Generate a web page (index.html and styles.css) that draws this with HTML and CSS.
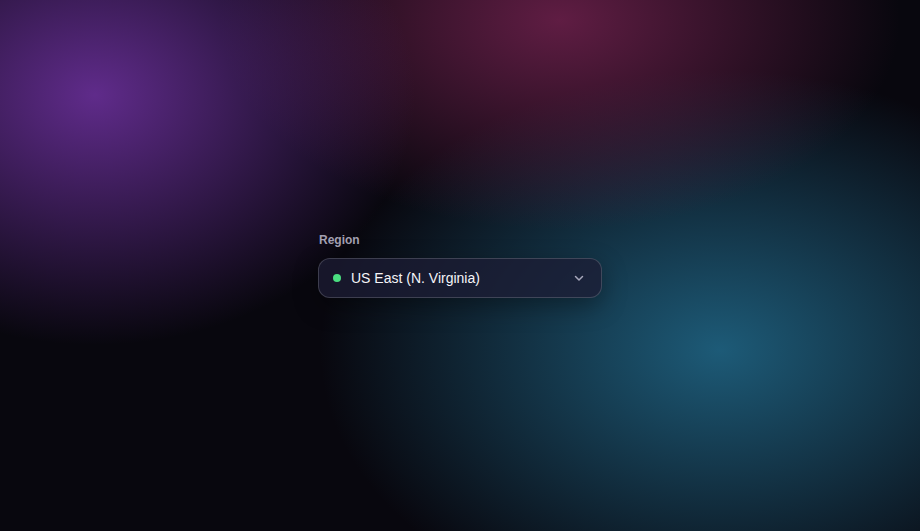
FILE: index.html
```html
<!DOCTYPE html>
<html>
<head>
<meta charset="utf-8">
<link rel="stylesheet" href="styles.css">
</head>
<body>
<div class="bg">
  <div class="field">
    <label class="label">Region</label>
    <button class="select">
      <span class="dot"></span>
      <span class="value">US East (N. Virginia)</span>
      <svg class="chev" width="12" height="12" viewBox="0 0 12 12"><path d="M2.5 4.5 L6 8 L9.5 4.5" fill="none" stroke="currentColor" stroke-width="1.5" stroke-linecap="round" stroke-linejoin="round"/></svg>
    </button>
  </div>
</div>
</body>
</html>
```
FILE: styles.css
```css
html, body { margin: 0; padding: 0; height: 100%; }
body { font-family: "Liberation Sans", Arial, sans-serif; background: #08070e; }
.bg {
  width: 920px; height: 531px;
  display: flex; align-items: center; justify-content: center;
  background:
    radial-gradient(ellipse 320px 250px at 95px 95px, rgba(100,45,145,0.95), rgba(100,45,145,0) 100%),
    radial-gradient(ellipse 340px 210px at 560px 20px, rgba(100,30,70,0.95), rgba(100,30,70,0) 100%),
    radial-gradient(ellipse 400px 280px at 720px 350px, rgba(30,95,125,0.95), rgba(30,95,125,0) 100%),
    #08070e;
}
.field { width: 284px; display: flex; flex-direction: column; gap: 11px; }
.label { font-size: 12px; font-weight: 700; color: #a3a0b2; padding-left: 1px; }
.select {
  height: 40px; box-sizing: border-box; width: 100%;
  display: flex; align-items: center; gap: 10px;
  padding: 0 16px 0 14px;
  background: rgba(28,28,52,0.75);
  border: 1px solid rgba(255,255,255,0.17);
  border-radius: 12px;
  box-shadow: 0 8px 24px rgba(0,0,0,0.35);
  font-family: inherit; cursor: pointer;
}
.dot { width: 8px; height: 8px; border-radius: 50%; background: #4ade80; flex: none; }
.value { flex: 1; text-align: left; color: #f4f4f8; font-size: 14px; }
.chev { color: #a8a8bc; flex: none; }
```
